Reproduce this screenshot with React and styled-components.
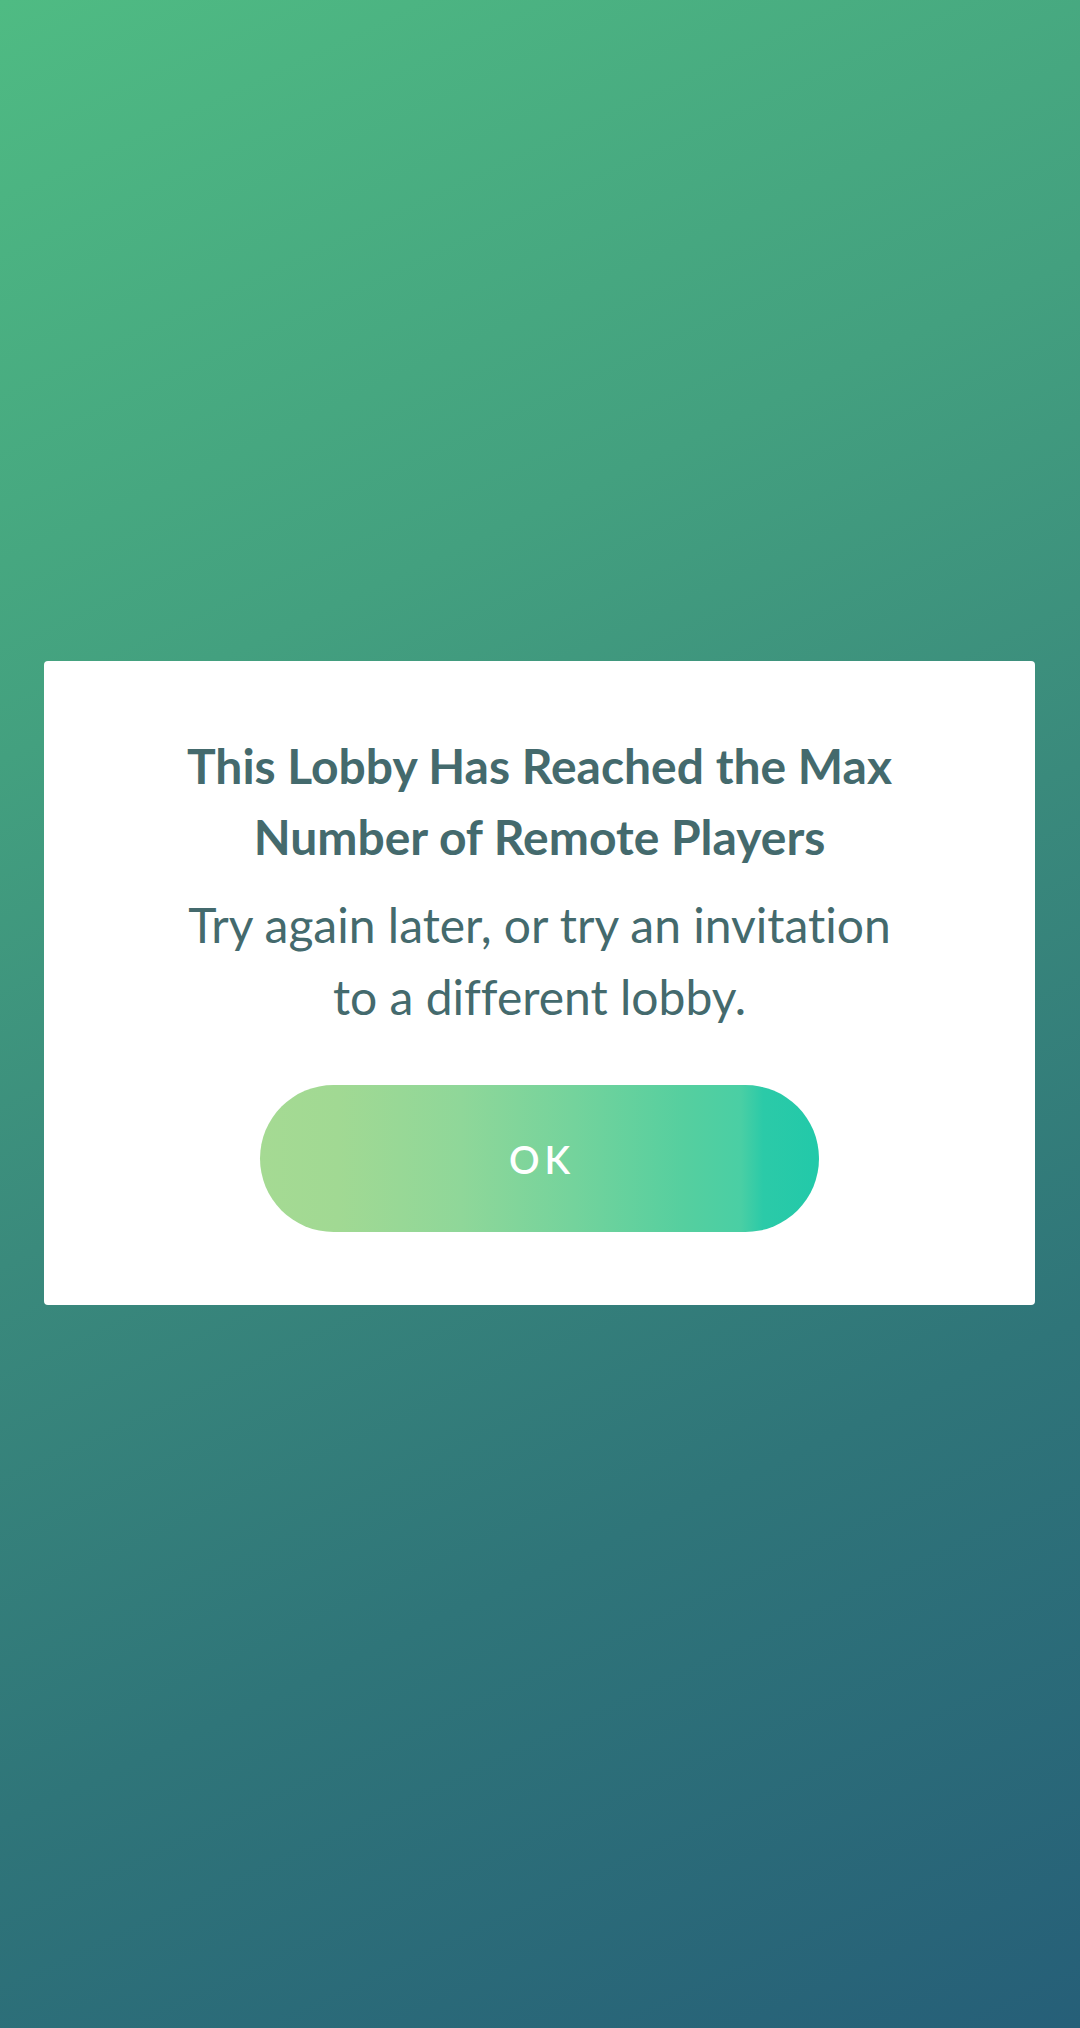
import React from "react";
import styled, { createGlobalStyle } from "styled-components";

const Global = createGlobalStyle`
  html, body { margin: 0; padding: 0; }
  body { font-family: "Lato", "Noto Sans", sans-serif; }
`;

const Screen = styled.div`
  box-sizing: border-box;
  width: 1080px;
  min-height: 2028px;
  padding: 661px 45px 0 44px;
  background: linear-gradient(155deg, #4fbb83 0%, #43a07f 30%, #3a8a7c 50%, #2f7579 72%, #265f78 100%);
  display: flex;
  flex-direction: column;
  align-items: stretch;
`;

const Dialog = styled.div`
  box-sizing: border-box;
  height: 644px;
  background: #ffffff;
  border-radius: 4px;
  padding: 69px 40px 0;
  display: flex;
  flex-direction: column;
  align-items: center;
  text-align: center;
  color: #446a6d;
  font-variant-ligatures: none;
`;

const Title = styled.h1`
  margin: 0;
  font-family: "Lato", "Noto Sans", sans-serif;
  font-weight: 700;
  font-size: 48px;
  line-height: 71px;
  white-space: nowrap;
`;

const Message = styled.p`
  margin: 17px 0 0;
  font-family: "Lato", "Noto Sans", sans-serif;
  font-weight: 400;
  font-size: 48px;
  line-height: 72px;
  white-space: nowrap;
`;

const OkButton = styled.button`
  margin-top: 52px;
  width: 559px;
  height: 147px;
  border: none;
  border-radius: 74px;
  background: linear-gradient(
    to right,
    #a5da93 0%,
    #a1d993 14%,
    #8fd799 36%,
    #74d39c 56%,
    #55cf9f 76%,
    #4acfa4 86%,
    #2bcaa8 90%,
    #22c9a9 100%
  );
  color: #ffffff;
  font-family: "Lato", "Noto Sans", sans-serif;
  font-weight: 600;
  font-size: 38px;
  letter-spacing: 5px;
  padding: 0 0 0 5px;
  display: flex;
  align-items: center;
  justify-content: center;
  cursor: pointer;
`;

export default function App() {
  return (
    <>
      <Global />
      <Screen>
        <Dialog>
          <Title>
            This Lobby Has Reached the Max
            <br />
            Number of Remote Players
          </Title>
          <Message>
            Try again later, or try an invitation
            <br />
            to a different lobby.
          </Message>
          <OkButton>OK</OkButton>
        </Dialog>
      </Screen>
    </>
  );
}
